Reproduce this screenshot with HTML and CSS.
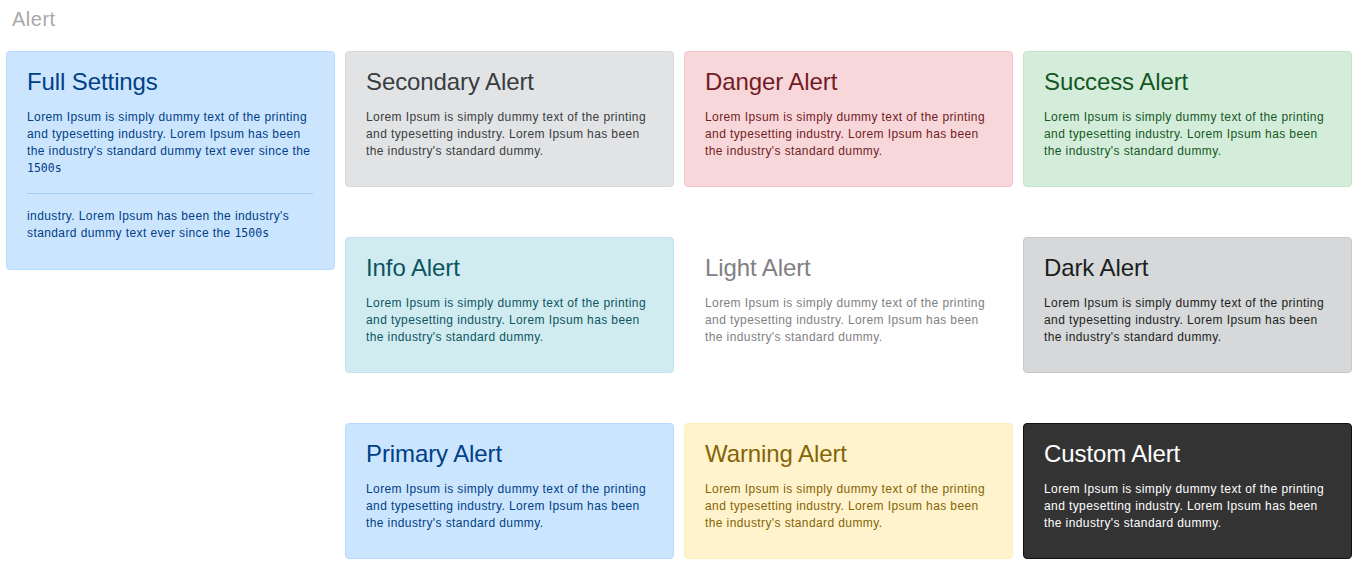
FILE: index.html
```html
<!DOCTYPE html>
<html lang="en">
<head>
<meta charset="utf-8">
<title>Alert</title>
<link rel="stylesheet" href="styles.css">
</head>
<body>
<div class="page">
  <h1 class="page-title">Alert</h1>
  <div class="layout">
    <div class="side">
      <div class="alert alert-primary alert-full">
        <h4 class="alert-heading">Full Settings</h4>
        <p>Lorem Ipsum is simply dummy text of the printing and typesetting industry. Lorem Ipsum has been the industry's standard dummy text ever since the <code>1500s</code></p>
        <hr>
        <p class="last">industry. Lorem Ipsum has been the industry's standard dummy text ever since the <code>1500s</code></p>
      </div>
    </div>
    <div class="grid">
      <div class="alert alert-secondary">
        <h4 class="alert-heading">Secondary Alert</h4>
        <p>Lorem Ipsum is simply dummy text of the printing and typesetting industry. Lorem Ipsum has been the industry's standard dummy.</p>
      </div>
      <div class="alert alert-danger">
        <h4 class="alert-heading">Danger Alert</h4>
        <p>Lorem Ipsum is simply dummy text of the printing and typesetting industry. Lorem Ipsum has been the industry's standard dummy.</p>
      </div>
      <div class="alert alert-success">
        <h4 class="alert-heading">Success Alert</h4>
        <p>Lorem Ipsum is simply dummy text of the printing and typesetting industry. Lorem Ipsum has been the industry's standard dummy.</p>
      </div>
      <div class="alert alert-info">
        <h4 class="alert-heading">Info Alert</h4>
        <p>Lorem Ipsum is simply dummy text of the printing and typesetting industry. Lorem Ipsum has been the industry's standard dummy.</p>
      </div>
      <div class="alert alert-light">
        <h4 class="alert-heading">Light Alert</h4>
        <p>Lorem Ipsum is simply dummy text of the printing and typesetting industry. Lorem Ipsum has been the industry's standard dummy.</p>
      </div>
      <div class="alert alert-dark">
        <h4 class="alert-heading">Dark Alert</h4>
        <p>Lorem Ipsum is simply dummy text of the printing and typesetting industry. Lorem Ipsum has been the industry's standard dummy.</p>
      </div>
      <div class="alert alert-primary">
        <h4 class="alert-heading">Primary Alert</h4>
        <p>Lorem Ipsum is simply dummy text of the printing and typesetting industry. Lorem Ipsum has been the industry's standard dummy.</p>
      </div>
      <div class="alert alert-warning">
        <h4 class="alert-heading">Warning Alert</h4>
        <p>Lorem Ipsum is simply dummy text of the printing and typesetting industry. Lorem Ipsum has been the industry's standard dummy.</p>
      </div>
      <div class="alert alert-custom">
        <h4 class="alert-heading">Custom Alert</h4>
        <p>Lorem Ipsum is simply dummy text of the printing and typesetting industry. Lorem Ipsum has been the industry's standard dummy.</p>
      </div>
    </div>
  </div>
</div>
</body>
</html>
```

FILE: styles.css
```css
* { box-sizing: border-box; }

html, body {
  margin: 0;
  padding: 0;
  background: #ffffff;
}

body {
  font-family: "Liberation Sans", Arial, sans-serif;
  font-size: 12px;
  line-height: 17px;
}

.page {
  padding: 6px 8px 0 6px;
}

.page-title {
  margin: 0 0 19px 6px;
  font-size: 20px;
  line-height: 26px;
  letter-spacing: 0.5px;
  font-weight: normal;
  color: #a8a8a8;
}

.layout {
  display: flex;
  align-items: flex-start;
  gap: 10px;
}

.side {
  width: 329px;
  flex: none;
}

.grid {
  display: grid;
  grid-template-columns: repeat(3, 329px);
  column-gap: 10px;
  row-gap: 50px;
}

.alert {
  border: 1px solid transparent;
  border-radius: 4px;
  padding: 15px 21px 10px 20px;
}

.alert-full {
  padding-bottom: 11px;
}

.alert-heading {
  margin: 0 0 13px;
  font-size: 24px;
  line-height: 29px;
  letter-spacing: -0.1px;
  font-weight: normal;
}

.alert p {
  margin: 0 0 16px;
  letter-spacing: 0.4px;
}

.alert hr {
  border: 0;
  border-top: 1px solid #a8cdf3;
  margin: 0 0 14px;
  height: 0;
}

code {
  font-family: "DejaVu Sans Mono", "Liberation Mono", monospace;
  font-size: 11.5px;
  line-height: 1;
  letter-spacing: 0;
}

.alert-primary { background: #cce5ff; border-color: #b8daff; color: #004085; }
.alert-secondary { background: #e2e3e5; border-color: #d6d8db; color: #383d41; }
.alert-danger { background: #f8d7da; border-color: #f5c6cb; color: #721c24; }
.alert-success { background: #d4edda; border-color: #c3e6cb; color: #155724; }
.alert-info { background: #d1ecf1; border-color: #bee5eb; color: #0c5460; }
.alert-light { background: #fefefe; border-color: #fdfdfe; color: #818182; }
.alert-dark { background: #d6d8d9; border-color: #c6c8ca; color: #1b1e21; }
.alert-warning { background: #fff3cd; border-color: #ffeeba; color: #856404; }
.alert-custom { background: #333333; border-color: #111111; color: #ffffff; }
```
